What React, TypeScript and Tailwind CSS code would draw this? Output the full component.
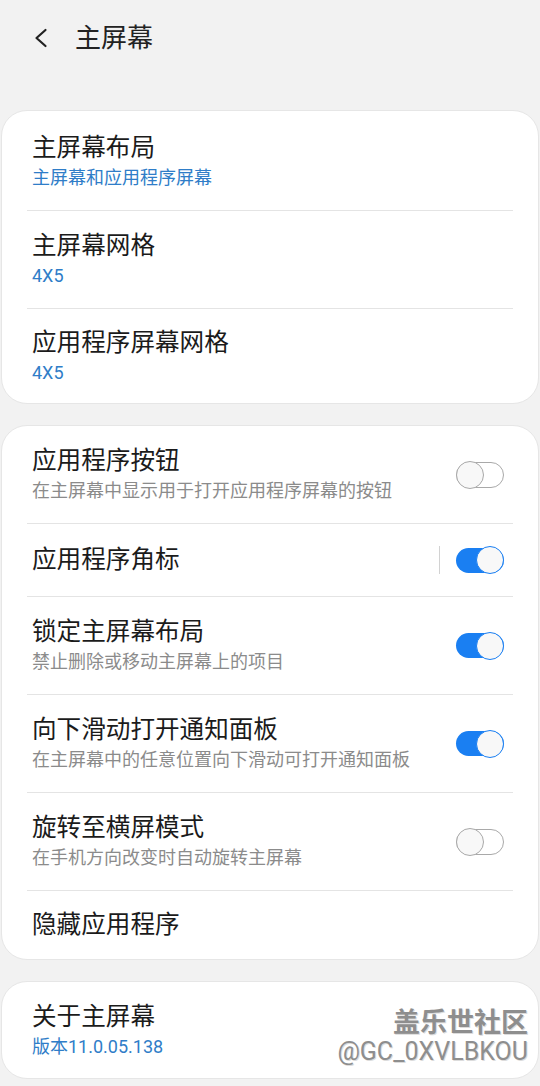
import React from "react";

const FONT = 'Roboto, "Noto Sans CJK SC", sans-serif';

function Toggle({ on }: { on: boolean }) {
  if (on) {
    return (
      <div className="relative w-[48px] h-[28px] flex items-center shrink-0">
        <div className="w-[48px] h-[25px] rounded-full bg-[#1a7ff2]" />
        <div className="absolute right-0 top-0 w-[28px] h-[28px] rounded-full bg-[#f8f8f8] border-[1.5px] border-[#1a7ff2]" />
      </div>
    );
  }
  return (
    <div className="relative w-[48px] h-[28px] flex items-center shrink-0">
      <div className="w-[48px] h-[26px] rounded-full border-[1.5px] border-[#a9a9a9]" />
      <div className="absolute left-0 top-0 w-[28px] h-[28px] rounded-full bg-[#f8f8f8] border-[1.5px] border-[#a9a9a9]" />
    </div>
  );
}

type RowProps = {
  title: string;
  sub?: string;
  subBlue?: boolean;
  toggle?: boolean | null;
  vline?: boolean;
  last?: boolean;
  h?: string;
};

function Row({ title, sub, subBlue, toggle, vline, last, h }: RowProps) {
  return (
    <div className={last ? "" : "border-b border-[#e4e4e4]"}>
      <div className={`flex items-center pl-[5px] pr-[9px] ${h ?? (sub ? "h-[97px]" : "h-[72px]")}`}>
        <div className="flex-1 flex flex-col">
          <div className="text-[24.6px] leading-[30px] text-[#1b1b1b]">{title}</div>
          {sub && (
            <div
              className={`mt-[3px] text-[18px] leading-[24px] ${subBlue ? "text-[#2f7dc8]" : "text-[#8b8b8b]"}`}
            >
              {sub}
            </div>
          )}
        </div>
        {vline && <div className="w-px h-[28px] bg-[#d2d2d2] mr-[16px]" />}
        {toggle !== undefined && toggle !== null && <Toggle on={toggle} />}
      </div>
    </div>
  );
}

export default function App() {
  return (
    <div className="w-[540px] h-[1086px] bg-[#f2f2f2] overflow-hidden" style={{ fontFamily: FONT }}>
      {/* Header */}
      <div className="h-[110px] flex items-start">
        <div className="h-[76px] flex items-center">
          <svg width="14" height="20" viewBox="0 0 14 20" className="ml-[34px]" fill="none">
            <path d="M11.5 2 L2.5 10 L11.5 18" stroke="#222" strokeWidth="2.2" strokeLinecap="round" strokeLinejoin="round" />
          </svg>
          <div className="ml-[27px] text-[26px] leading-[32px] text-[#222]">主屏幕</div>
        </div>
      </div>

      {/* Card 1 */}
      <div className="mx-px bg-white rounded-[26px] border border-[#e6e6e6] px-[25px] pt-px">
        <Row title="主屏幕布局" sub="主屏幕和应用程序屏幕" subBlue h="h-[98px]" />
        <Row title="主屏幕网格" sub="4X5" subBlue h="h-[97px]" />
        <Row title="应用程序屏幕网格" sub="4X5" subBlue last h="h-[94px]" />
      </div>

      {/* Card 2 */}
      <div className="mt-[21px] mx-px bg-white rounded-[26px] border border-[#e6e6e6] px-[25px]">
        <Row title="应用程序按钮" sub="在主屏幕中显示用于打开应用程序屏幕的按钮" toggle={false} />
        <Row title="应用程序角标" toggle={true} vline />
        <Row title="锁定主屏幕布局" sub="禁止删除或移动主屏幕上的项目" toggle={true} />
        <Row title="向下滑动打开通知面板" sub="在主屏幕中的任意位置向下滑动可打开通知面板" toggle={true} />
        <Row title="旋转至横屏模式" sub="在手机方向改变时自动旋转主屏幕" toggle={false} />
        <Row title="隐藏应用程序" last h="h-[68px]" />
      </div>

      {/* Card 3 */}
      <div className="relative mt-[21px] mx-px bg-white rounded-[26px] border border-[#e6e6e6] px-[25px]">
        <Row title="关于主屏幕" sub="版本11.0.05.138" subBlue last h="h-[96px]" />
        <div className="absolute right-[10px] top-[26px] flex flex-col items-end pointer-events-none">
          <div className="text-[27px] leading-[30px] font-semibold text-[#8e8e8e] [text-shadow:1px_1px_0_#dcdcdc]">
            盖乐世社区
          </div>
          <div className="mt-[1px] text-[25px] leading-[26px] text-[#8e8e8e] [text-shadow:1px_1px_0_#dcdcdc]">
            @GC_0XVLBKOU
          </div>
        </div>
      </div>
    </div>
  );
}
